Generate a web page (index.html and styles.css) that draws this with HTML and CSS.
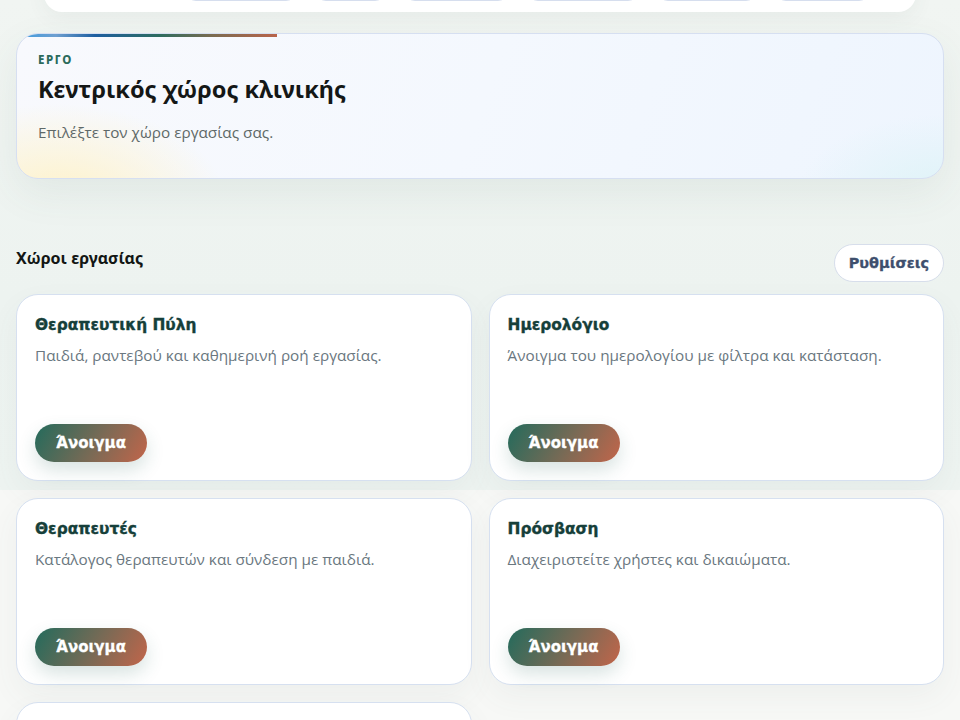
FILE: index.html
```html
<!DOCTYPE html>
<html lang="el">
<head>
<meta charset="utf-8">
<title>Κεντρικός χώρος κλινικής</title>
<link rel="stylesheet" href="styles.css">
</head>
<body>
<div class="page">
  <nav class="topbar">
    <div class="tabs">
      <span class="tab t1"></span>
      <span class="tab t2"></span>
      <span class="tab t3"></span>
      <span class="tab t4"></span>
      <span class="tab t5"></span>
      <span class="tab t6"></span>
    </div>
  </nav>

  <header class="hero">
    <div class="hero-accent"></div>
    <div class="eyebrow">ΕΡΓΟ</div>
    <h1 class="hero-title">Κεντρικός χώρος κλινικής</h1>
    <p class="hero-sub">Επιλέξτε τον χώρο εργασίας σας.</p>
  </header>

  <section class="workspaces">
    <div class="section-head">
      <h2 class="section-title">Χώροι εργασίας</h2>
      <button class="ghost-btn">Ρυθμίσεις</button>
    </div>
    <div class="grid">
      <article class="card">
        <h3 class="card-title">Θεραπευτική Πύλη</h3>
        <p class="card-desc">Παιδιά, ραντεβού και καθημερινή ροή εργασίας.</p>
        <button class="open-btn">Άνοιγμα</button>
      </article>
      <article class="card">
        <h3 class="card-title">Ημερολόγιο</h3>
        <p class="card-desc">Άνοιγμα του ημερολογίου με φίλτρα και κατάσταση.</p>
        <button class="open-btn">Άνοιγμα</button>
      </article>
      <article class="card">
        <h3 class="card-title">Θεραπευτές</h3>
        <p class="card-desc">Κατάλογος θεραπευτών και σύνδεση με παιδιά.</p>
        <button class="open-btn">Άνοιγμα</button>
      </article>
      <article class="card">
        <h3 class="card-title">Πρόσβαση</h3>
        <p class="card-desc">Διαχειριστείτε χρήστες και δικαιώματα.</p>
        <button class="open-btn">Άνοιγμα</button>
      </article>
      <article class="card">
        <h3 class="card-title">Ρυθμίσεις</h3>
        <p class="card-desc">Γενικές ρυθμίσεις της κλινικής.</p>
        <button class="open-btn">Άνοιγμα</button>
      </article>
    </div>
  </section>
</div>
</body>
</html>
```

FILE: styles.css
```css
html {
  background: #f7f8f6;
}
body {
  margin: 0;
  font-family: "Noto Sans", "Open Sans", sans-serif;
  color: #111;
  background: linear-gradient(180deg, #f1f5f2 0%, #edf3f0 60%, #eef4f1 100%) no-repeat;
  background-size: 100% 490px;
}
.page {
  padding: 0 16px 40px;
}
.topbar {
  margin: -50px 28px 21px;
  height: 62px;
  background: #fff;
  border-radius: 0 0 18px 18px;
  box-shadow: 0 6px 20px rgba(60, 90, 80, 0.06);
  display: flex;
  align-items: flex-end;
}
.tabs {
  display: flex;
  gap: 20px;
  padding: 0 0 11px 142px;
}
.tab {
  display: block;
  box-sizing: border-box;
  height: 30px;
  border: 1px solid #d6deee;
  border-radius: 10px;
  background: #fbfcfe;
}
.t1 { width: 110px; }
.t2 { width: 69px; }
.t3 { width: 103px; }
.t4 { width: 110px; }
.t5 { width: 98px; }
.t6 { width: 93px; }

.hero {
  position: relative;
  border: 1px solid #d6dff1;
  border-radius: 22px;
  padding: 18px 21px 36px;
  background:
    radial-gradient(ellipse 170px 100px at 40px 170px, rgba(255, 242, 198, 1), rgba(255, 242, 198, 0) 100%),
    radial-gradient(ellipse 150px 80px at 930px 160px, rgba(222, 243, 247, 1), rgba(222, 243, 247, 0) 100%),
    linear-gradient(110deg, #f8f9fd 0%, #f4f8fe 50%, #eef5fe 100%);
  box-shadow: 0 14px 40px rgba(70, 100, 90, 0.08);
  overflow: hidden;
}
.hero-accent {
  position: absolute;
  left: 0;
  top: 0;
  width: 260px;
  height: 3px;
  background: linear-gradient(90deg, #3c9ce0 0%, #6e9fd0 15%, #1d5ea0 30%, #2e6c5e 55%, #7a6b50 75%, #b9644b 100%);
}
.eyebrow {
  font-size: 11.5px;
  font-weight: 800;
  letter-spacing: 1.6px;
  color: #2b6a5c;
  line-height: 16px;
}
.hero-title {
  margin: 5px 0 0;
  font-size: 23.5px;
  font-weight: 700;
  line-height: 32px;
  color: #141716;
}
.hero-sub {
  margin: 17px 0 0;
  font-family: "Open Sans", "Noto Sans", sans-serif;
  font-size: 15.3px;
  line-height: 20px;
  color: #5f6968;
}

.workspaces {
  margin-top: 65px;
}
.section-head {
  display: flex;
  justify-content: space-between;
  align-items: flex-start;
  margin-bottom: 12px;
}
.section-title {
  margin: 3px 0 0;
  font-size: 16px;
  font-weight: 700;
  line-height: 22px;
  color: #121614;
}
.ghost-btn {
  height: 38px;
  padding: 0 14px;
  border: 1px solid #d7deeb;
  border-radius: 19px;
  background: #fff;
  font-family: "DejaVu Sans", sans-serif;
  font-weight: 700;
  font-size: 14.5px;
  color: #3e4f6d;
  -webkit-text-stroke: 0.3px #3e4f6d;
}
.grid {
  display: grid;
  grid-template-columns: 1fr 1fr;
  gap: 17px;
}
.card {
  height: 187px;
  box-sizing: border-box;
  background: #fff;
  border: 1px solid #d6e0f0;
  border-radius: 22px;
  padding: 20px 18px 18px;
  display: flex;
  flex-direction: column;
  align-items: flex-start;
  box-shadow: 0 12px 30px rgba(80, 110, 100, 0.06);
}
.card-title {
  margin: 0;
  font-family: "DejaVu Sans", sans-serif;
  font-size: 15.4px;
  font-weight: 700;
  line-height: 20px;
  color: #163f3a;
  -webkit-text-stroke: 0.35px #163f3a;
}
.card-desc {
  margin: 10px 0 0;
  font-family: "Open Sans", "Noto Sans", sans-serif;
  font-size: 15.3px;
  line-height: 20px;
  color: #6a7780;
}
.open-btn {
  margin-top: auto;
  width: 112px;
  height: 38px;
  border: none;
  border-radius: 19px;
  background: linear-gradient(120deg, #236b5c 0%, #7a6a55 55%, #c2654a 100%);
  color: #fff;
  font-family: "DejaVu Sans", sans-serif;
  font-weight: 700;
  font-size: 15px;
  -webkit-text-stroke: 0.3px #fff;
  box-shadow: 0 8px 18px rgba(40, 100, 90, 0.18);
}
```
